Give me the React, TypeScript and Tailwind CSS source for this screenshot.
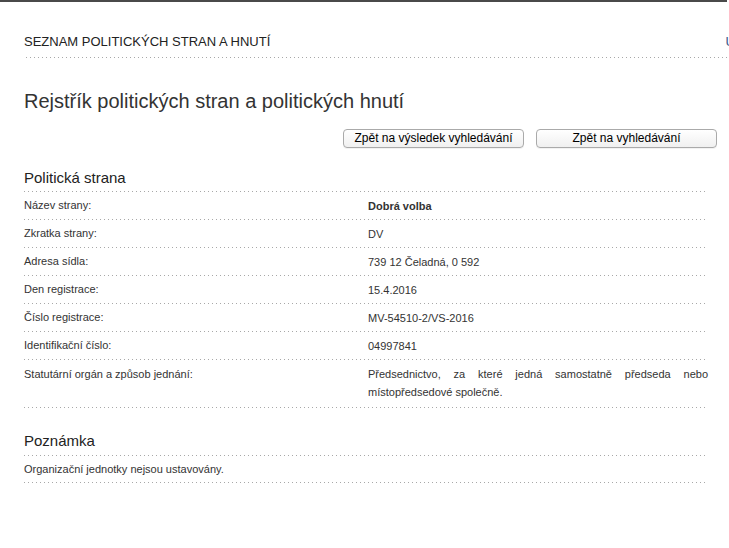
import React from "react";

const dots =
  "bg-[linear-gradient(to_right,#a8a8a8_1px,transparent_1px)] bg-[length:4px_1px] bg-repeat-x bg-bottom";

const rows: { label: string; value: React.ReactNode; bold?: boolean; tall?: boolean }[] = [
  { label: "Název strany:", value: "Dobrá volba", bold: true },
  { label: "Zkratka strany:", value: "DV" },
  { label: "Adresa sídla:", value: "739 12 Čeladná, 0 592" },
  { label: "Den registrace:", value: "15.4.2016" },
  { label: "Číslo registrace:", value: "MV-54510-2/VS-2016" },
  { label: "Identifikační číslo:", value: "04997841" },
  {
    label: "Statutární orgán a způsob jednání:",
    value:
      "Předsednictvo, za které jedná samostatně předseda nebo místopředsedové společně.",
    tall: true,
  },
];

export default function App() {
  return (
    <div
      className="w-[729px] h-[548px] bg-white overflow-hidden text-[#333]"
      style={{ fontFamily: '"Liberation Sans", Arial, sans-serif' }}
    >
      <div className="h-[2px] w-[727px] bg-[#4a4a4a]" />
      <div className="relative pl-6">
        <div className={`pt-[32px] pb-[8px] ${dots} w-[720px]`}>
          <div className="text-[13px] leading-[16px] text-[#222]">
            SEZNAM POLITICKÝCH STRAN A HNUTÍ
          </div>
        </div>
        <div className="absolute right-[-6px] top-[30px] text-[13px] text-[#3a5a8a]">Ú</div>
      </div>

      <div className="pl-6 w-[708px]">
        <h1 className="mt-[31px] text-[20px] leading-[24px] text-[#333]">
          Rejstřík politických stran a politických hnutí
        </h1>

        <div className="mt-[16px] flex justify-end gap-3 mr-[-9px]">
          <button className="w-[181px] h-[19px] rounded-[4px] border border-[#aaa] bg-gradient-to-b from-white to-[#f0f0f0] text-[12px] leading-[17px] text-black shadow-[0_1px_0_rgba(0,0,0,0.05)]">
            Zpět na výsledek vyhledávání
          </button>
          <button className="w-[181px] h-[19px] rounded-[4px] border border-[#aaa] bg-gradient-to-b from-white to-[#f0f0f0] text-[12px] leading-[17px] text-black shadow-[0_1px_0_rgba(0,0,0,0.05)]">
            Zpět na vyhledávání
          </button>
        </div>

        <div className={`mt-[21px] pb-[5px] ${dots}`}>
          <h2 className="text-[15px] leading-[18px] text-[#222]">Politická strana</h2>
        </div>

        {rows.map((r) => (
          <div
            key={r.label}
            className={`flex text-[11px] leading-[18px] ${dots} ${
              r.tall ? "pt-[5px] pb-[7px]" : "h-[28px] items-center"
            }`}
          >
            <div className="w-[344px] shrink-0 self-start text-[#333]">
              <div className={r.tall ? "" : "leading-[26px]"}>{r.label}</div>
            </div>
            <div
              className={`flex-1 text-[#333] ${r.bold ? "font-bold" : ""} ${
                r.tall ? "text-justify" : "leading-[26px]"
              }`}
            >
              {r.value}
            </div>
          </div>
        ))}

        <div className={`mt-[24px] pb-[6px] ${dots}`}>
          <h2 className="text-[15px] leading-[18px] text-[#222]">Poznámka</h2>
        </div>
        <div className={`text-[11px] leading-[27px] text-[#333] ${dots}`}>
          Organizační jednotky nejsou ustavovány.
        </div>
      </div>
    </div>
  );
}
